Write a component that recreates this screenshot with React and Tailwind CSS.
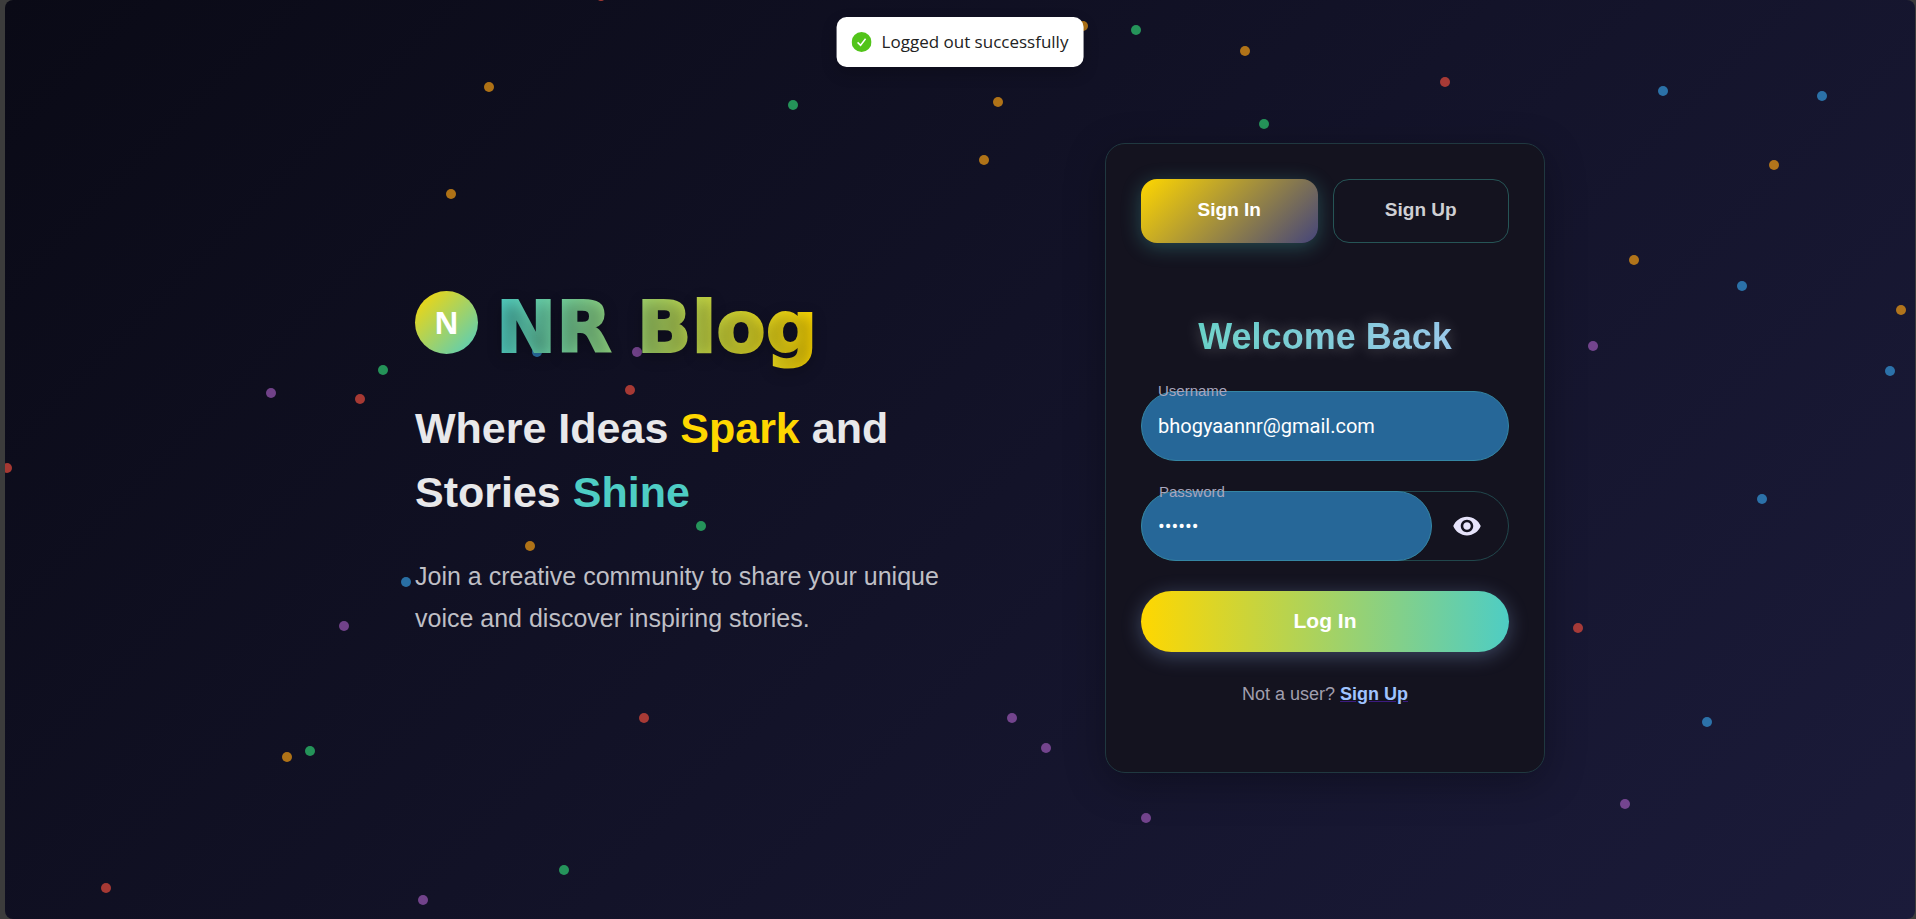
import { MdVisibility } from "react-icons/md";

const DOT_COLORS = {
  red: "bg-[#e74c3c]",
  orange: "bg-[#f39c12]",
  green: "bg-[#2ecc71]",
  blue: "bg-[#3498db]",
  purple: "bg-[#9b59b6]",
};

// Particle centres inside the starfield.
const PARTICLES = [
  ["red", 601, -4], ["orange", 489, 87], ["orange", 451, 194], ["green", 793, 105],
  ["orange", 1083, 26], ["green", 1136, 30], ["orange", 1245, 51], ["orange", 998, 102],
  ["orange", 984, 160], ["green", 1264, 124], ["red", 1445, 82], ["blue", 1663, 91],
  ["blue", 1822, 96], ["orange", 1774, 165], ["orange", 1634, 260], ["blue", 1742, 286],
  ["orange", 1901, 310], ["blue", 1890, 371], ["purple", 1593, 346], ["blue", 1762, 499],
  ["red", 1578, 628], ["blue", 1707, 722], ["purple", 1625, 804], ["purple", 1146, 818],
  ["purple", 1046, 748], ["purple", 1012, 718], ["red", 644, 718], ["green", 564, 870],
  ["purple", 423, 900], ["red", 106, 888], ["green", 310, 751], ["orange", 287, 757],
  ["purple", 344, 626], ["blue", 406, 582], ["orange", 530, 546], ["green", 701, 526],
  ["red", 7, 468], ["purple", 271, 393], ["red", 360, 399], ["green", 383, 370],
  ["blue", 537, 352], ["purple", 637, 352], ["red", 630, 390],
];

function Particles() {
  return (
    <div className="absolute inset-0" aria-hidden="true">
      {PARTICLES.map(([color, x, y]) => (
        <span
          key={`${x}-${y}`}
          className={`absolute size-[10px] rounded-full opacity-70 ${DOT_COLORS[color]}`}
          style={{ left: x - 10, top: y - 5 }}
        />
      ))}
    </div>
  );
}

function Toast() {
  return (
    <div
      role="status"
      className="absolute top-[17px] left-1/2 z-10 flex h-[50px] -translate-x-1/2 items-center gap-[10px] rounded-[10px] bg-white px-[15px] font-['Open_Sans',sans-serif] text-[17px] whitespace-nowrap text-[#222222] shadow-[0_6px_16px_rgba(0,0,0,0.2)]"
    >
      <svg viewBox="0 0 20 20" className="size-[20px]" aria-hidden="true">
        <circle cx="10" cy="10" r="10" fill="#52c41a" />
        <path d="M6 10.4 9 13.3 14 6.8" fill="none" stroke="#fff" strokeWidth="1.5" />
      </svg>
      Logged out successfully
    </div>
  );
}

function Hero() {
  return (
    <section className="w-[560px] pb-[5px]">
      <div className="flex items-center gap-[18px]">
        <span className="flex size-[63px] items-center justify-center rounded-full bg-linear-[135deg,#ffd700,#4ecdc4] font-['Noto_Sans',sans-serif] text-[30px] font-bold text-white">
          N
        </span>
        <h1 className="bg-linear-[90deg,#4ecdc4,#ffd700] bg-clip-text pt-[10px] font-['DejaVu_Sans',sans-serif] text-[72px] leading-[90px] font-black text-transparent [-webkit-text-stroke:2px_transparent] [text-shadow:0_4px_15px_rgba(0,0,0,0.3)]">
          NR Blog
        </h1>
      </div>
      <h2 className="mt-[24px] text-[43px] leading-[64px] font-bold text-[#e8e8ea]">
        Where Ideas <span className="text-[#ffd700]">Spark</span> and
        <br />
        Stories <span className="text-[#4ecdc4]">Shine</span>
      </h2>
      <p className="mt-[31px] text-[25px] leading-[42px] text-[#bfbfc5]">
        Join a creative community to share your unique voice and discover inspiring stories.
      </p>
    </section>
  );
}

const LABEL = "absolute -top-[9px] left-[17px] text-[15px] leading-[18px] text-[#a9a6bd]";

function AuthCard() {
  return (
    <section className="w-[440px] rounded-[20px] border border-[#203840] bg-[#14131f] px-[35px] pt-[35px] pb-[66px] shadow-[0_10px_40px_rgba(0,0,0,0.3)]">
      <div className="grid grid-cols-2 gap-[15px] text-[19px] font-bold">
        <button className="h-[64px] rounded-[16px] bg-linear-[135deg,#ffd700,#45457a] pb-[2px] text-white shadow-[0_4px_20px_rgba(78,205,196,0.3)]">
          Sign In
        </button>
        <button className="h-[64px] rounded-[16px] border border-[#265556] pb-[2px] text-[#cfcfd3]">
          Sign Up
        </button>
      </div>

      <form onSubmit={(e) => e.preventDefault()}>
        <h3 className="mt-[70px] text-center text-[36px] leading-[48px] font-bold">
          <span className="bg-linear-[90deg,#5ccdc4,#90c4e8] bg-clip-text text-transparent [text-shadow:0_0_15px_rgba(255,255,255,0.25)]">
            Welcome Back
          </span>
        </h3>

        <div className="relative mt-[30px]">
          <input
            id="username"
            type="text"
            defaultValue="bhogyaannr@gmail.com"
            className="h-[70px] w-full rounded-full border border-[#3586a4] bg-[#266798] px-[16px] font-[Roboto,sans-serif] text-[20px] text-white outline-none"
          />
          <label htmlFor="username" className={LABEL}>Username</label>
        </div>

        <div className="relative mt-[30px] flex h-[70px] items-center rounded-full border border-[#21474c]">
          <input
            id="password"
            type="password"
            defaultValue="secret"
            className="-my-px -ml-px h-[70px] w-[291px] rounded-full border border-[#3586a4] bg-[#266798] px-[16px] font-[Roboto,sans-serif] text-[20px] text-white outline-none"
          />
          <button type="button" aria-label="Show password" className="ml-[20px] text-[#e6e3fa]">
            <MdVisibility size={30} />
          </button>
          <label htmlFor="password" className={LABEL}>Password</label>
        </div>

        <button
          type="submit"
          className="mt-[30px] h-[61px] w-full rounded-full bg-linear-[90deg,#ffd700,#4ecdc4] pb-[2px] text-[21px] font-bold text-white shadow-[0_4px_20px_rgba(160,196,255,0.3)]"
        >
          Log In
        </button>
      </form>

      <p className="mt-[30px] text-center text-[18px] leading-[24px] text-[#a19fae]">
        Not a user?{" "}
        <a href="#signup" className="font-bold text-[#a0c4ff] underline decoration-[#3c1a80]">
          Sign Up
        </a>
      </p>
    </section>
  );
}

export default function App() {
  return (
    <div className="flex min-h-screen bg-[#3c3c3c] pr-px pl-[5px] font-['Liberation_Sans',Arial,sans-serif]">
      <main className="relative flex flex-1 items-center justify-center gap-[130px] overflow-hidden rounded-[8px] bg-linear-[135deg,#0a0a16,#1b1b3a] pb-[3px] pl-[40px]">
        <Particles />
        <Toast />
        <div className="relative">
          <Hero />
        </div>
        <div className="relative">
          <AuthCard />
        </div>
      </main>
    </div>
  );
}
